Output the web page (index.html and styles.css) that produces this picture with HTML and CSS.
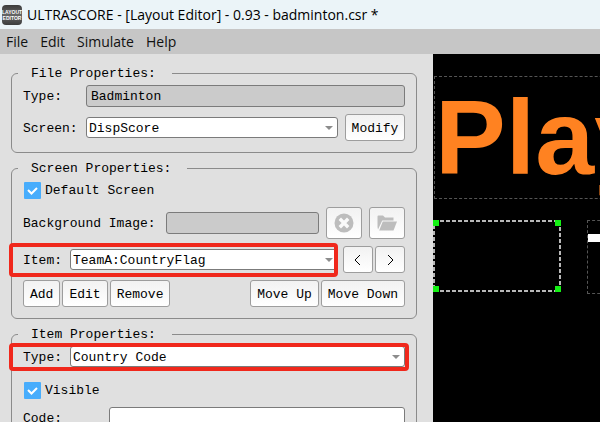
FILE: index.html
```html
<!DOCTYPE html>
<html lang="en">
<head>
<meta charset="utf-8">
<title>ULTRASCORE</title>
<link rel="stylesheet" href="styles.css">
</head>
<body>
<header class="titlebar">
  <span class="logo"><span>LAYOUT</span><span>EDITOR</span></span>
  <h1 class="title">ULTRASCORE - [Layout Editor] - 0.93 - badminton.csr *</h1>
</header>
<nav class="menubar">
  <button class="menu">File</button>
  <button class="menu">Edit</button>
  <button class="menu">Simulate</button>
  <button class="menu">Help</button>
</nav>
<main class="workspace">
  <form class="panel">
    <fieldset class="group">
      <legend>File Properties:</legend>
      <div class="stack">
        <div class="row">
          <label class="label label-file" for="file-type">Type:</label>
          <input class="field" id="file-type" type="text" value="Badminton" readonly>
        </div>
        <div class="row">
          <label class="label label-file" for="screen">Screen:</label>
          <span class="combo"><select id="screen"><option>DispScore</option></select></span>
          <button class="btn btn-modify" type="button">Modify</button>
        </div>
      </div>
    </fieldset>

    <fieldset class="group">
      <legend>Screen Properties:</legend>
      <div class="stack">
        <label class="check"><input type="checkbox" checked><svg class="tick" viewBox="0 0 17 17"><path d="M4 8l3.5 3.5L13 6"/></svg><span>Default Screen</span></label>
        <div class="row">
          <label class="label label-image" for="bg-image">Background Image:</label>
          <input class="field" id="bg-image" type="text" readonly>
          <button class="btn btn-icon" type="button" aria-label="Clear image">
            <svg viewBox="0 0 20 20"><circle cx="10" cy="10" r="9.5" fill="#bdbdbd"/><path d="M5.800 5.800l8.400 8.400M14.200 5.800l-8.400 8.400" stroke="#fafafa" stroke-width="3.4"/></svg>
          </button>
          <button class="btn btn-icon" type="button" aria-label="Open image">
            <svg viewBox="0 0 20 20"><path d="M0.500 14V3.500q0-1 1-1H6l2 2h8.500v3H5.200L1 16.500Z" fill="#bdbdbd"/><path d="M5.800 8.500H20L16.500 17.500H2.200Z" fill="#bdbdbd"/></svg>
          </button>
        </div>
        <div class="row row-item">
          <div class="callout callout-item">
            <label class="label label-item" for="item">Item:</label>
            <span class="combo"><select id="item"><option>TeamA:CountryFlag</option></select></span>
          </div>
          <div class="buttons">
            <button class="btn btn-step" type="button" aria-label="Previous item"><svg viewBox="0 0 12 12"><path d="M8 1L3 6l5 5"/></svg></button>
            <button class="btn btn-step" type="button" aria-label="Next item"><svg viewBox="0 0 12 12"><path d="M4 1l5 5-5 5"/></svg></button>
          </div>
        </div>
        <div class="row row-split">
          <div class="buttons">
            <button class="btn" type="button">Add</button>
            <button class="btn" type="button">Edit</button>
            <button class="btn" type="button">Remove</button>
          </div>
          <div class="buttons">
            <button class="btn" type="button">Move Up</button>
            <button class="btn" type="button">Move Down</button>
          </div>
        </div>
      </div>
    </fieldset>

    <fieldset class="group">
      <legend>Item Properties:</legend>
      <div class="stack">
        <div class="callout callout-type">
          <label class="label label-item" for="item-type">Type:</label>
          <span class="combo"><select id="item-type"><option>Country Code</option></select></span>
        </div>
        <label class="check check-spaced"><input type="checkbox" checked><svg class="tick" viewBox="0 0 17 17"><path d="M4 8l3.5 3.5L13 6"/></svg><span>Visible</span></label>
        <div class="row">
          <label class="label label-code" for="code">Code:</label>
          <input class="field field-edit" id="code" type="text">
        </div>
      </div>
    </fieldset>
  </form>

  <section class="canvas">
    <div class="item item-name">Player</div>
    <div class="item item-flag">
      <svg class="outline" viewBox="0 0 128 72"><rect x="1" y="1" width="126" height="70"/></svg>
      <i class="handle nw"></i><i class="handle ne"></i><i class="handle sw"></i><i class="handle se"></i>
    </div>
    <div class="item item-score"><i class="bar"></i></div>
  </section>
</main>
</body>
</html>
```
FILE: styles.css
```css
* {
  box-sizing: border-box;
}

body {
  margin: 0;
  height: 100vh;
  display: flex;
  flex-direction: column;
  overflow: hidden;
  background: #e0e0e0;
  color: #000;
  font: 14px/20px "Open Sans", "Noto Sans", sans-serif;
}

.titlebar {
  flex: none;
  display: flex;
  align-items: center;
  gap: 5px;
  height: 29px;
  padding-left: 2px;
  background: #ebf4f8;
}

.logo {
  display: flex;
  flex-direction: column;
  align-items: center;
  justify-content: center;
  width: 20px;
  height: 20px;
  border-radius: 4px;
  background: linear-gradient(#3c3c3c, #666 50%, #3c3c3c);
  color: #fff;
  font: bold 5px/6px "Liberation Sans", sans-serif;
}

.title {
  margin: 0;
  font-size: 14px;
  font-weight: 400;
  white-space: nowrap;
}

.menubar {
  flex: none;
  display: flex;
  gap: 12px;
  height: 25px;
  padding-left: 6px;
  background: #c6c6c6;
}

.menu {
  padding: 0;
  border: 0;
  background: none;
  color: #111;
  font: 14px/24px "Open Sans", "Noto Sans", sans-serif;
}

.workspace {
  flex: 1;
  min-height: 0;
  display: grid;
  grid-template-columns: minmax(0, 433px) 1fr;
}

.panel {
  display: flex;
  flex-direction: column;
  gap: 6px;
  min-height: 0;
  padding: 10px 16px 0 11px;
  overflow: hidden;
  font: 13px/18px "Liberation Mono", monospace;
}

.group {
  flex: none;
  min-width: 0;
  margin: 0;
  padding: 3px 11px 11px;
  border: 1px solid #8b8b8b;
  border-radius: 6px;
}

.group legend {
  height: 18px;
  margin-left: -5px;
  padding: 1px 16px 0 13px;
}

.stack {
  display: flex;
  flex-direction: column;
  gap: 7px;
}

.row,
.callout {
  display: flex;
  align-items: center;
}

.row {
  gap: 7px;
}

.row-item {
  gap: 5px;
}

.row-split {
  justify-content: space-between;
}

.label,
.check span {
  flex: none;
  padding-top: 2px;
  white-space: nowrap;
}

.label-file {
  width: 56px;
}

.label-image {
  width: 136px;
}

.label-item {
  width: 47px;
}

.label-code {
  width: 79px;
}

.field {
  flex: 1;
  min-width: 0;
  height: 22px;
  padding: 1px 4px 0;
  border: 1px solid #7b7b7b;
  border-radius: 3px;
  background: #cbcbcb;
  color: #000;
  font: inherit;
}

.field-edit {
  background: #fff;
}

.combo {
  position: relative;
  flex: 1;
  display: flex;
  min-width: 0;
}

.combo select {
  appearance: none;
  width: 100%;
  height: 21px;
  padding: 2px 20px 0 2px;
  border: 1px solid #7b7b7b;
  border-radius: 3px;
  background: #fff;
  color: #000;
  font: inherit;
}

.combo::after {
  content: "";
  position: absolute;
  top: 9px;
  right: 5px;
  border: 4px solid transparent;
  border-top-color: #8c8c8c;
  border-bottom: 0;
}

.btn {
  flex: none;
  display: flex;
  align-items: center;
  justify-content: center;
  height: 27px;
  padding: 2px 6px 0;
  border: 1px solid #9d9d9d;
  border-radius: 3px;
  background: linear-gradient(#f2f2f2, #fff);
  color: #000;
  font: inherit;
}

.btn-modify {
  width: 60px;
}

.btn-icon {
  width: 36px;
  height: 32px;
  padding: 0;
}

.btn-icon svg {
  flex: none;
  width: 20px;
  height: 20px;
}

.btn-step {
  width: 30px;
  padding: 0;
}

.btn-step svg {
  flex: none;
  width: 12px;
  height: 12px;
  fill: none;
  stroke: #000;
}

.buttons {
  display: flex;
  gap: 2px;
}

.check {
  position: relative;
  display: flex;
  align-items: center;
  gap: 4px;
  height: 20px;
  padding-left: 1px;
}

.check-spaced {
  margin-top: 6px;
}

.check input {
  appearance: none;
  width: 17px;
  height: 17px;
  margin: 0;
  border-radius: 1px;
  background: #48adfc;
}

.tick {
  position: absolute;
  width: 17px;
  height: 17px;
  fill: none;
  stroke: #fff;
  stroke-width: 2;
}

.callout {
  position: relative;
}

.callout-item {
  flex: 1;
  min-width: 0;
}

.callout::after {
  content: "";
  position: absolute;
  inset: -3px -4px -4px -14px;
  border: 4px solid #f0281c;
  border-radius: 4px;
  pointer-events: none;
}

.row-item .callout {
  align-self: stretch;
}

.callout-item::after {
  right: 0;
}

.canvas {
  position: relative;
  overflow: hidden;
  background: #000;
}

.item {
  position: absolute;
  border: 1px dashed #555;
}

.item-name {
  top: 22px;
  left: 1px;
  width: 480px;
  height: 123px;
  color: #ff8221;
  font: bold 106px/121px "Liberation Sans", Arial, sans-serif;
}

.item-flag {
  top: 166px;
  left: 0;
  width: 128px;
  height: 72px;
  border: 0;
}

.outline {
  display: block;
  width: 128px;
  height: 72px;
  fill: none;
  stroke: #b8b8b8;
  stroke-width: 2;
  stroke-dasharray: 4 2;
}

.item-score {
  top: 166px;
  left: 154px;
  width: 100px;
  height: 74px;
}

.bar {
  position: absolute;
  top: 13px;
  left: 0;
  width: 60px;
  height: 8px;
  background: #fff;
}

.handle {
  position: absolute;
  width: 6px;
  height: 6px;
  background: #14f014;
}

.nw,
.ne {
  top: 0;
}

.sw,
.se {
  bottom: 0;
}

.nw,
.sw {
  left: 0;
}

.ne,
.se {
  right: 0;
}
```
